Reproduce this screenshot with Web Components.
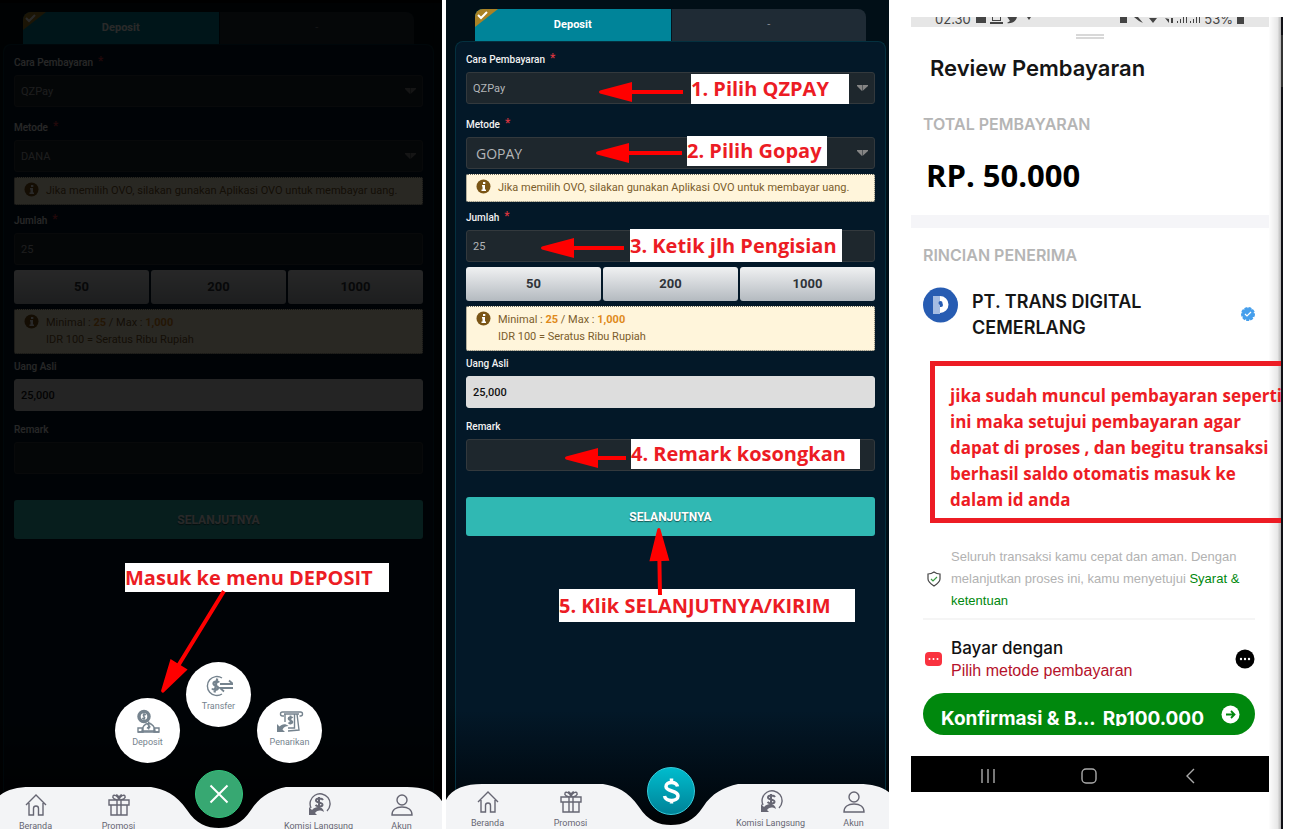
<!DOCTYPE html>
<html lang="id">
<head>
<meta charset="utf-8">
<title>Panduan Deposit</title>
<style>
  body { margin: 0; background: #fff; font-family: Roboto, sans-serif; overflow: hidden; }
</style>
</head>
<body>
<guide-page>
  <deposit-screen class="first" dimmed label="Menu">
    <form-field slot="fields" kind="select" label="Cara Pembayaran" required value="QZPay"></form-field>
    <form-field slot="fields" class="gap-l" kind="select" label="Metode" required value="DANA"></form-field>
    <info-note slot="fields">Jika memilih OVO, silakan gunakan Aplikasi OVO untuk membayar uang.</info-note>
    <form-field slot="fields" class="gap-m" label="Jumlah" required value="25"></form-field>
    <amount-picks slot="fields"></amount-picks>
    <info-note slot="fields" class="tall">Minimal : <b>25</b> / Max : <b>1,000</b><br>IDR 100 = Seratus Ribu Rupiah</info-note>
    <form-field slot="fields" class="gap-s" kind="result" label="Uang Asli" value="25,000"></form-field>
    <form-field slot="fields" class="gap-r" label="Remark" value=""></form-field>
    <round-action slot="over" icon="deposit" label="Deposit" style="left:121px;bottom:69px"></round-action>
    <round-action slot="over" icon="transfer" label="Transfer" style="left:192px;bottom:105px"></round-action>
    <round-action slot="over" icon="withdraw" label="Penarikan" style="left:263px;bottom:69px"></round-action>
    <guide-callout slot="over" style="left:131px;top:560px;width:264px;height:29px">Masuk ke menu DEPOSIT</guide-callout>
    <guide-arrow slot="over" length="120" style="left:230px;top:588px;--turn:121.5deg"></guide-arrow>
  </deposit-screen>
  <deposit-screen label="Formulir">
    <form-field slot="fields" kind="select" label="Cara Pembayaran" required value="QZPay"></form-field>
    <form-field slot="fields" class="gap-l" kind="select" big label="Metode" required value="GOPAY"></form-field>
    <info-note slot="fields">Jika memilih OVO, silakan gunakan Aplikasi OVO untuk membayar uang.</info-note>
    <form-field slot="fields" class="gap-m" label="Jumlah" required value="25"></form-field>
    <amount-picks slot="fields"></amount-picks>
    <info-note slot="fields" class="tall">Minimal : <b>25</b> / Max : <b>1,000</b><br>IDR 100 = Seratus Ribu Rupiah</info-note>
    <form-field slot="fields" class="gap-s" kind="result" label="Uang Asli" value="25,000"></form-field>
    <form-field slot="fields" class="gap-r" label="Remark" value=""></form-field>
    <guide-callout slot="over" style="left:245px;top:74px;width:158px;height:30px">1. Pilih QZPAY</guide-callout>
    <guide-arrow slot="over" length="85" style="left:237px;top:92px;--turn:180deg"></guide-arrow>
    <guide-callout slot="over" style="left:241px;top:136px;width:140px;height:30px">2. Pilih Gopay</guide-callout>
    <guide-arrow slot="over" length="87" style="left:236px;top:153px;--turn:180deg"></guide-arrow>
    <guide-callout slot="over" style="left:184px;top:229px;width:212px;height:33px">3. Ketik jlh Pengisian</guide-callout>
    <guide-arrow slot="over" length="84" style="left:178px;top:248px;--turn:180deg"></guide-arrow>
    <guide-callout slot="over" style="left:185px;top:439px;width:229px;height:30px">4. Remark kosongkan</guide-callout>
    <guide-arrow slot="over" length="62" style="left:180px;top:458px;--turn:180deg"></guide-arrow>
    <guide-callout slot="over" style="left:113px;top:589px;width:296px;height:33px">5. Klik SELANJUTNYA/KIRIM</guide-callout>
    <guide-arrow slot="over" length="68" style="left:214px;top:595px;--turn:-91deg"></guide-arrow>
  </deposit-screen>
  <payment-review></payment-review>
</guide-page>

<script>
const make = (name, html, setup) => {
  const tpl = document.createElement('template');
  tpl.innerHTML = html;
  customElements.define(name, class extends HTMLElement {
    constructor() {
      super();
      this.attachShadow({ mode: 'open' }).append(tpl.content.cloneNode(true));
    }
    connectedCallback() { if (setup) setup(this, this.shadowRoot); }
  });
};

const icons = {
  home: '<path d="M2 12 12 2l10 10M5 10v12h4.500v-6.500a2.500 2.500 0 0 1 5 0V22H19V10"/>',
  gift: '<path d="M2 7h20v5H2zM4 12v10h16V12M10 7v15M14 7v15M12 7C8 7 5 5 6 3s5 0 6 4c1-4 5-6 6-4s-2 4-6 4M9 2c2 0 3 2 3 5 0-3 1-5 3-5"/>',
  commission: '<path d="M4 15A10 10 0 1 1 20 18" /><path d="M2 14v8h8l-2-2c3-3 5-3 9-1-1-5-7-7-12-2z" fill="currentColor" stroke="none"/><path stroke-width="2" d="M16 7c-1-2-7-2-7 .5S16 9 15.500 12c-.5 2-5 2-7 0M12 4v11"/>',
  user: '<circle cx="12" cy="7" r="5"/><path d="M2 22c0-5 4-8 10-8s10 3 10 8z"/>',
  deposit: '<circle cx="10" cy="8.500" r="5" stroke-width="3.500"/><path d="M12 7c-1.500-1.500-4 0-2 1.500s0 3-2 1.500M10 5v7" stroke-width="1.300"/><path fill="#fff" d="M8 23a6.500 7.500 0 1 1 13 0zM4 20h5v4H4zM20 20h5v4h-5z"/><path d="M4 24h21M16.500 15.500c-2-1.200-4 .5-1.800 1.800s1 3.500-1.800 2.200M14.700 13.500v8"/>',
  transfer: '<path d="M17 6A9.500 9.500 0 1 0 17 22"/><path stroke-width="2.200" d="M14 10.500c-1-2-6-1-5.500 1.500S13.500 13.500 13 16s-5 2-6 .5M12.200 6.500 9.500 20.500"/><path stroke-width="1.800" d="M15 12h13l-4-3.500M28 16H15l4 3.500"/>',
  withdraw: '<path d="M8 8H6.500a2 2 0 0 1 0-4h18a2 2 0 0 1 0 4h-1M8 6h15"/><path d="M9 6v8M21 6l2 16-11 1M18.500 6v14H12"/><path stroke-width="1.800" d="M16.500 10c-1-1.500-4-1-4 .7s4 1.600 4 3.300-3 2-4 .5M14.500 7.500v9"/><path fill="currentColor" stroke="none" d="M1 16v8h8l-2.500-2.500c1.500-3 3.500-3.500 6-3.500-3-3-7-2-9 .5z"/>'
};
const drawIcon = (el, name, box) => {
  el.innerHTML = `<svg viewBox="0 0 ${box} ${box}" fill="none" stroke="currentColor" stroke-width="1.400" aria-hidden="true">${icons[name]}</svg>`;
};

make('guide-page', `<style>
  :host { display: grid; grid-template-columns: 442fr 447fr 408fr; height: 100vh; }
  ::slotted(:nth-child(2)) { margin-left: 4px; }
  ::slotted(*) { min-width: 0; }
</style><slot></slot>`);

make('deposit-screen', `<style>
  :host { display: block; overflow: hidden; background: #000; }
  .screen { position: relative; display: flex; flex-direction: column; height: 100vh; width: calc(100% + 6px); box-sizing: border-box; padding: 9px 9px 0; background: linear-gradient(#010f17, #010f17 85%, #000); }
  :host(.first) .screen { width: calc(100% + 7px); margin-left: -6px; margin-top: 3px; }
  .tabs { display: grid; grid-template-columns: 1fr 1fr; height: 32px; flex: none; margin: 0 20px; border-radius: 8px 8px 0 0; overflow: hidden; }
  .tabs button { position: relative; border: 0; padding: 0; font: 700 11px/32px Roboto, sans-serif; color: #fff; background: #008499; }
  .tabs button + button { background: #1f2b35; color: #8b8f94; border-left: 1px solid #02151f; font-weight: 400; }
  .tabs svg { position: absolute; left: 0; top: 0; width: 23px; height: 18px; }
  .card { flex: 1; box-sizing: border-box; border: 1px solid #04303f; border-bottom: 0; border-radius: 8px 8px 0 0; padding: 11px 10px 0; background: linear-gradient(#031828, #031828 85%, #00070d 97%, #000); }
  ::slotted(.gap-l) { margin-top: 14px; }
  ::slotted(.gap-r) { margin-top: 12px; }
  ::slotted(.gap-m) { margin-top: 9px; }
  ::slotted(.gap-s) { margin-top: 6px; }
  .submit { display: block; width: 100%; height: 39px; margin-top: 26px; border: 0; border-radius: 3px; background: #30b8b3; color: #fff; font: 700 12px/39px Roboto, sans-serif; text-shadow: 0 1px 1px #0008; }
  .shade { display: none; position: absolute; inset: -3px 0 0; background: #000; opacity: .84; }
  :host([dimmed]) .shade { display: block; }
  .over { position: absolute; inset: 0; }
  bottom-nav { position: absolute; left: 0; right: 0; bottom: 0; }
</style>
<div class="screen">
  <div class="tabs"><button type="button"><svg viewBox="0 0 23 18"><path d="M0 0h23L0 18z" fill="#a98225"/><path d="m3 6 3 3 6-6" fill="none" stroke="#fff" stroke-width="2"/></svg>Deposit</button><button type="button">-</button></div>
  <form class="card"><slot name="fields"></slot><button class="submit" type="button">SELANJUTNYA</button></form>
  <div class="shade"></div>
  <bottom-nav></bottom-nav>
  <div class="over"><slot name="over"></slot></div>
</div>`, (host, root) => {
  if (host.hasAttribute('dimmed')) root.querySelector('bottom-nav').setAttribute('open', '');
});

make('form-field', `<style>
  :host { display: block; }
  label { display: block; padding-top: 1px; margin-bottom: 6px; font: 500 10px/12px Roboto, sans-serif; color: #f2f2f2; }
  i { display: none; font-style: normal; font-size: 12px; line-height: 8px; color: #d8343f; margin-left: 5px; vertical-align: 1px; }
  :host([required]) i { display: inline-block; }
  .box { position: relative; }
  .control { display: block; appearance: none; box-sizing: border-box; width: 100%; height: 32px; margin: 0; padding: 0 6px; border: 1px solid #33393d; border-radius: 3px; background: #1e272d; color: #b2b5b8; font: 400 11px Roboto, sans-serif; opacity: 1; }
  :host([kind=result]) .control { background: #ddd; border-color: #ddd; color: #111; font-weight: 500; }
  :host([big]) .control { font: 400 14px "Open Sans", sans-serif; padding-left: 9px; }
  svg { position: absolute; right: 7px; top: 13px; width: 11px; height: 7px; }
</style><label for="c"><span></span><i>*</i></label><div class="box"></div>`, (host, root) => {
  root.querySelector('span').textContent = host.getAttribute('label');
  const value = host.getAttribute('value');
  const box = root.querySelector('.box');
  box.innerHTML = host.getAttribute('kind') === 'select'
    ? `<select id="c" class="control"><option>${value}</option></select><svg viewBox="0 0 11 7"><path d="M0 0h5v6L0 1zM5.500 0H11v1L5.500 6z" fill="#858585"/></svg>`
    : `<input id="c" class="control" type="text" value="${value}">`;
});

make('info-note', `<style>
  :host { display: flex; gap: 7px; box-sizing: border-box; height: 28px; margin-top: 5px; padding: 4px 9px; border: 1px dotted #6b6a5e; border-radius: 2px; background: #fff5db; color: #7b5d2b; font: 400 11px/17px Roboto, sans-serif; }
  :host(.tall) { height: 45px; }
  svg { width: 15px; height: 15px; flex: none; }
  ::slotted(b) { color: #e08a1b; font-weight: 700; }
</style><svg viewBox="0 0 15 15" aria-hidden="true"><circle cx="7.500" cy="7.500" r="7" fill="#7a5516"/><path d="M7 3h2.300v2H7zM6 6h3v4.500h1V12H5.500v-1.500H6.500V7.500H6z" fill="#fff"/></svg><div><slot></slot></div>`);

make('amount-picks', `<style>
  :host { display: grid; grid-template-columns: repeat(3, 1fr); gap: 2px; margin-top: 5px; }
  button { height: 34px; padding: 0; border: 0; border-radius: 3px; background: linear-gradient(#f0f1f2, #b4bac0); color: #2f3338; font: 700 13px/32px Roboto, sans-serif; }
</style><button type="button">50</button><button type="button">200</button><button type="button">1000</button>`);

make('round-action', `<style>
  :host { position: absolute; display: block; width: 65px; height: 65px; }
  button { display: flex; flex-direction: column; align-items: center; width: 65px; height: 65px; padding: 10px 0 0; border: 0; border-radius: 50%; background: #fff; color: #75838e; font: 400 9px/12px Roboto, sans-serif; }
  span, svg { display: block; width: 28px; height: 28px; }
  em { font-style: normal; }
</style><button type="button"><span></span><em></em></button>`, (host, root) => {
  drawIcon(root.querySelector('span'), host.getAttribute('icon'), 28);
  root.querySelector('em').textContent = host.getAttribute('label');
});

make('nav-item', `<style>
  :host { display: block; text-align: center; }
  a { display: flex; flex-direction: column; align-items: center; gap: 3px; padding-top: 6px; color: #666673; font: 400 9px/12px Roboto, sans-serif; text-decoration: none; white-space: nowrap; }
  span { display: block; width: 24px; height: 24px; }
  em { font-style: normal; }
</style><a href="#"><span></span><em></em></a>`, (host, root) => {
  drawIcon(root.querySelector('span'), host.getAttribute('icon'), 24);
  root.querySelector('em').textContent = host.getAttribute('label');
});

make('bottom-nav', `<style>
  :host { display: block; height: 45px; overflow: visible; }
  .wave { position: absolute; inset: 0; width: 100%; height: 45px; }
  nav { position: relative; display: grid; grid-template-columns: 83fr 83fr 117fr 83fr 83fr; height: 45px; overflow: hidden; }
  .fab { position: absolute; left: 50%; bottom: 14px; width: 48px; height: 48px; margin-left: -24px; padding: 0; border: 1px solid #37cddc; border-radius: 50%; background: linear-gradient(#00bccd, #008398); }
  :host([open]) .fab { background: #37a872; border-color: #32c47c; }
  .fab svg { display: block; width: 46px; height: 46px; }
  .close { display: none !important; }
  :host([open]) .close { display: block !important; }
  :host([open]) .money { display: none; }
</style>
<svg class="wave" viewBox="0 0 449 45" preserveAspectRatio="none" aria-hidden="true"><path d="M0 16C6 4 20 0 36 0H157C170 2 182 7 193 23C202 37 213 41 225 41S248 37 257 23C266 9 278 3 292 0H413C429 0 443 4 449 16V45H0z" fill="#f3f4f6"/></svg>
<nav>
  <nav-item icon="home" label="Beranda"></nav-item>
  <nav-item icon="gift" label="Promosi"></nav-item>
  <div></div>
  <nav-item icon="commission" label="Komisi Langsung"></nav-item>
  <nav-item icon="user" label="Akun"></nav-item>
</nav>
<button class="fab" type="button" aria-label="Transaksi">
  <svg class="money" viewBox="0 0 46 46" fill="none" stroke="#fff" stroke-width="3.500"><path d="M29.500 18.500C28.500 13 18 13 18 18.500C18 24 30 22 30 28C30 34 17.500 34 16.500 28M23.500 10.500V15M23.500 31V35.500"/></svg>
  <svg class="close" viewBox="0 0 46 46" stroke="#fff" stroke-width="2"><path d="m14.500 14.500 17 17M31.500 14.500l-17 17"/></svg>
</button>`);

make('guide-callout', `<style>
  :host { position: absolute; display: flex; align-items: center; box-sizing: border-box; background: #fff; color: #ec1c24; font: 700 20px/28px "Open Sans", sans-serif; white-space: nowrap; }
</style><slot></slot>`);

make('guide-arrow', `<style>
  :host { position: absolute; display: block; width: 0; height: 0; }
  svg { position: absolute; left: 0; top: -11px; height: 22px; transform: rotate(var(--turn)); transform-origin: 0 50%; }
</style><svg aria-hidden="true"></svg>`, (host, root) => {
  const n = +host.getAttribute('length');
  const svg = root.querySelector('svg');
  svg.setAttribute('width', n);
  svg.setAttribute('height', 22);
  svg.innerHTML = `<path d="M0 9H${n - 34}V1L${n - 2} 9.500Q${n} 11 ${n - 2} 12.500L${n - 34} 21V13H0z" fill="#f00"/>`;
});

make('payment-review', `<style>
  :host { display: grid; grid-template-columns: 22px 1fr 12px 2px 14px; height: 100vh; padding-top: 17px; box-sizing: border-box; background: #fff; font-family: Inter, sans-serif; color: #151515; overflow: hidden; }
  .phone { grid-column: 2; min-width: 0; }
  .shadow { grid-column: 3; background: linear-gradient(90deg, #fdfdfd, #e8e8e8 70%, #b4b4b4); }
  .edge { grid-column: 4; background: linear-gradient(#101015 18px, #333 18px, #333 70px, #101015 70px); }
  .status { display: flex; justify-content: space-between; height: 10px; padding: 0 25px 0 24px; background: #e6e6e6; overflow: hidden; font: 400 13px/16px Inter, sans-serif; color: #444; }
  .status span { display: flex; gap: 4px; margin-top: -6px; }
  .status svg { height: 16px; }
  .handle { width: 28px; height: 1px; margin: 7px auto 0; border: solid #d8d8d8; border-width: 2px 0; }
  h1 { margin: 13px 0 0 19px; font: 600 22px/32px Inter, sans-serif; }
  h2 { margin: 30px 0 0 12px; font: 600 16px/20px Inter, sans-serif; color: #b5b5b5; }
  .amount { margin: 21px 0 0 15px; font: 700 31px/40px "Open Sans", sans-serif; color: #000; }
  .band { height: 13px; margin-top: 20px; background: #f5f5f8; }
  .band + h2 { margin-top: 17px; }
  .who { display: grid; grid-template-columns: 36px 1fr 14px; column-gap: 13px; margin: 22px 14px 0 12px; font: 600 18px/26px Inter, sans-serif; }
  .who svg:last-child { align-self: center; }
  .who p { margin: 2px 0 0; }
  .notice { margin: 20px -12px 0 19px; border: 5px solid #ed1c24; border-right: 0; padding: 17px 0 5px 15px; color: #ed1c24; font: 700 17px/26px "Open Sans", sans-serif; white-space: nowrap; overflow: hidden; position: relative; }
  .terms { display: grid; grid-template-columns: 16px 1fr; column-gap: 9px; align-items: center; margin: 23px 14px 0 15px; font: 400 13px/22px "Liberation Sans", sans-serif; color: #b2b2b2; white-space: nowrap; }
  .terms p { margin: 0; }
  .terms a { color: #00880d; text-decoration: none; }
  .rule { height: 2px; margin: 6px 14px 0 12px; background: #f5f5f5; }
  .pay { display: grid; grid-template-columns: 19px 1fr 20px; column-gap: 8px; align-items: center; margin: 16px 14px 0 13px; }
  .pay p { margin: 0; font: 400 16px/22px "Liberation Sans", sans-serif; color: #b5122b; }
  .pay strong { display: block; font: 500 17px/24px Inter, sans-serif; color: #111; }
  .pay button { border: 0; padding: 0; background: none; height: 20px; }
  .confirm { display: flex; align-items: center; gap: 7px; width: calc(100% - 26px); height: 42px; margin: 11px 14px 0 12px; padding: 0 15px 0 18px; border: 0; border-radius: 21px; background: #00880d; color: #fff; font: 700 19px/24px Inter, sans-serif; }
  .confirm span { height: 19px; margin-top: 5px; overflow: hidden; white-space: nowrap; }
  .confirm svg { margin-left: auto; }
  .keys { display: grid; grid-template-columns: repeat(3, 1fr); height: 36px; margin-top: 21px; padding: 4px 28px 0 26px; box-sizing: border-box; background: #000; align-items: center; justify-items: center; }
  svg { display: block; }
</style>
<main class="phone">
  <div class="status"><span>02.30
    <svg width="62" viewBox="0 0 62 16" fill="#444"><path d="M1 4h10v8H1zM15 11h13v2H15zM17 4h9v6h-9zm1 1v4h7V5zM31 4c2 2 4 2 6 0l5 1c0 5-5 8-10 7l3-2zM52 6l4 0-2 3z"/></svg></span>
    <span><svg width="81" viewBox="0 0 81 16" fill="#444"><path d="M1 4h7v8H1zM15 6l4 0 5 6-4-2zM30 7h8l-4 5zM46 7l4 1v4zM52 7h2v5h-2zM58 10h1v2h-1zM61 8h1v4h-1zM64 6h1v6h-1zM67 5h1v7h-1zM71 10h1v2h-1zM74 8h1v4h-1zM77 6h1v6h-1zM80 5h1v7h-1z"/></svg>53%<svg width="7" viewBox="0 0 7 16" fill="#444"><path d="M0 4h7v9H0z"/></svg></span></div>
  <div class="handle"></div>
  <h1>Review Pembayaran</h1>
  <h2>TOTAL PEMBAYARAN</h2>
  <div class="amount">RP. 50.000</div>
  <div class="band"></div>
  <h2>RINCIAN PENERIMA</h2>
  <div class="who">
    <svg width="36" height="36" viewBox="0 0 36 36"><circle cx="17.500" cy="18" r="17.500" fill="#275cb2"/><path d="M10 9h7v18h-7z" fill="#a4bce2"/><path d="M17 9a8.500 8.500 0 0 1 0 17v-6h1a2 2 0 0 0 0-4h-1z" fill="#fff"/><circle cx="17.500" cy="16" r="2" fill="#275cb2"/></svg>
    <p>PT. TRANS DIGITAL<br>CEMERLANG</p>
    <svg width="14" height="14" viewBox="0 0 14 14"><circle cx="7" cy="7" r="6" fill="#469fec" stroke="#469fec" stroke-width="2" stroke-dasharray="3 1"/><path d="m4 7 2 2 4-4" fill="none" stroke="#fff" stroke-width="1.200"/></svg>
  </div>
  <div class="notice">jika sudah muncul pembayaran seperti<br>ini maka setujui pembayaran agar<br>dapat di proses , dan begitu transaksi<br>berhasil saldo otomatis masuk ke<br>dalam id anda</div>
  <div class="terms">
    <svg width="16" height="16" viewBox="0 0 16 16" fill="none"><path d="M8 1c2 1.500 4 2 6 2v5c0 3-3 5-6 7-3-2-6-4-6-7V3c2 0 4-.5 6-2z" stroke="#444" stroke-width="1.200"/><path d="m5 8 2 2 4-4" stroke="#3a9a44" stroke-width="1.200"/></svg>
    <p>Seluruh transaksi kamu cepat dan aman. Dengan<br>melanjutkan proses ini, kamu menyetujui <a href="#">Syarat &amp;<br>ketentuan</a></p>
  </div>
  <div class="rule"></div>
  <div class="pay">
    <svg width="19" height="16" viewBox="0 0 19 16"><rect x="1" y="1" width="17" height="14" rx="4" fill="#f9323f"/><g fill="#fff"><circle cx="5.500" cy="8" r="1"/><circle cx="9.500" cy="8" r="1"/><circle cx="13.500" cy="8" r="1"/></g></svg>
    <p><strong>Bayar dengan</strong>Pilih metode pembayaran</p>
    <button type="button" aria-label="Metode lain"><svg width="20" height="20" viewBox="0 0 20 20"><circle cx="10" cy="10" r="9.500"/><g fill="#fff"><circle cx="6" cy="10" r="1.200"/><circle cx="10" cy="10" r="1.200"/><circle cx="14" cy="10" r="1.200"/></g></svg></button>
  </div>
  <button class="confirm" type="button"><span>Konfirmasi &amp; B...</span><span>Rp100.000</span>
    <svg width="19" height="19" viewBox="0 0 19 19"><circle cx="9.500" cy="9.500" r="9" fill="#fff"/><path d="M5 9.500h8M10 6l3.500 3.500L10 13" fill="none" stroke="#00880d" stroke-width="1.800"/></svg></button>
  <div class="keys">
    <svg width="16" height="16" viewBox="0 0 16 16" stroke="#aaa" stroke-width="1.400"><path d="M2 1v14M8 1v14M14 1v14"/></svg>
    <svg width="16" height="16" viewBox="0 0 16 16" fill="none" stroke="#aaa" stroke-width="1.400"><rect x="1" y="1" width="14" height="14" rx="4"/></svg>
    <svg width="16" height="16" viewBox="0 0 16 16" fill="none" stroke="#aaa" stroke-width="1.400"><path d="m12 1-7 7 7 7"/></svg>
  </div>
</main>
<div class="shadow"></div><div class="edge"></div>`);
</script>
</body>
</html>
